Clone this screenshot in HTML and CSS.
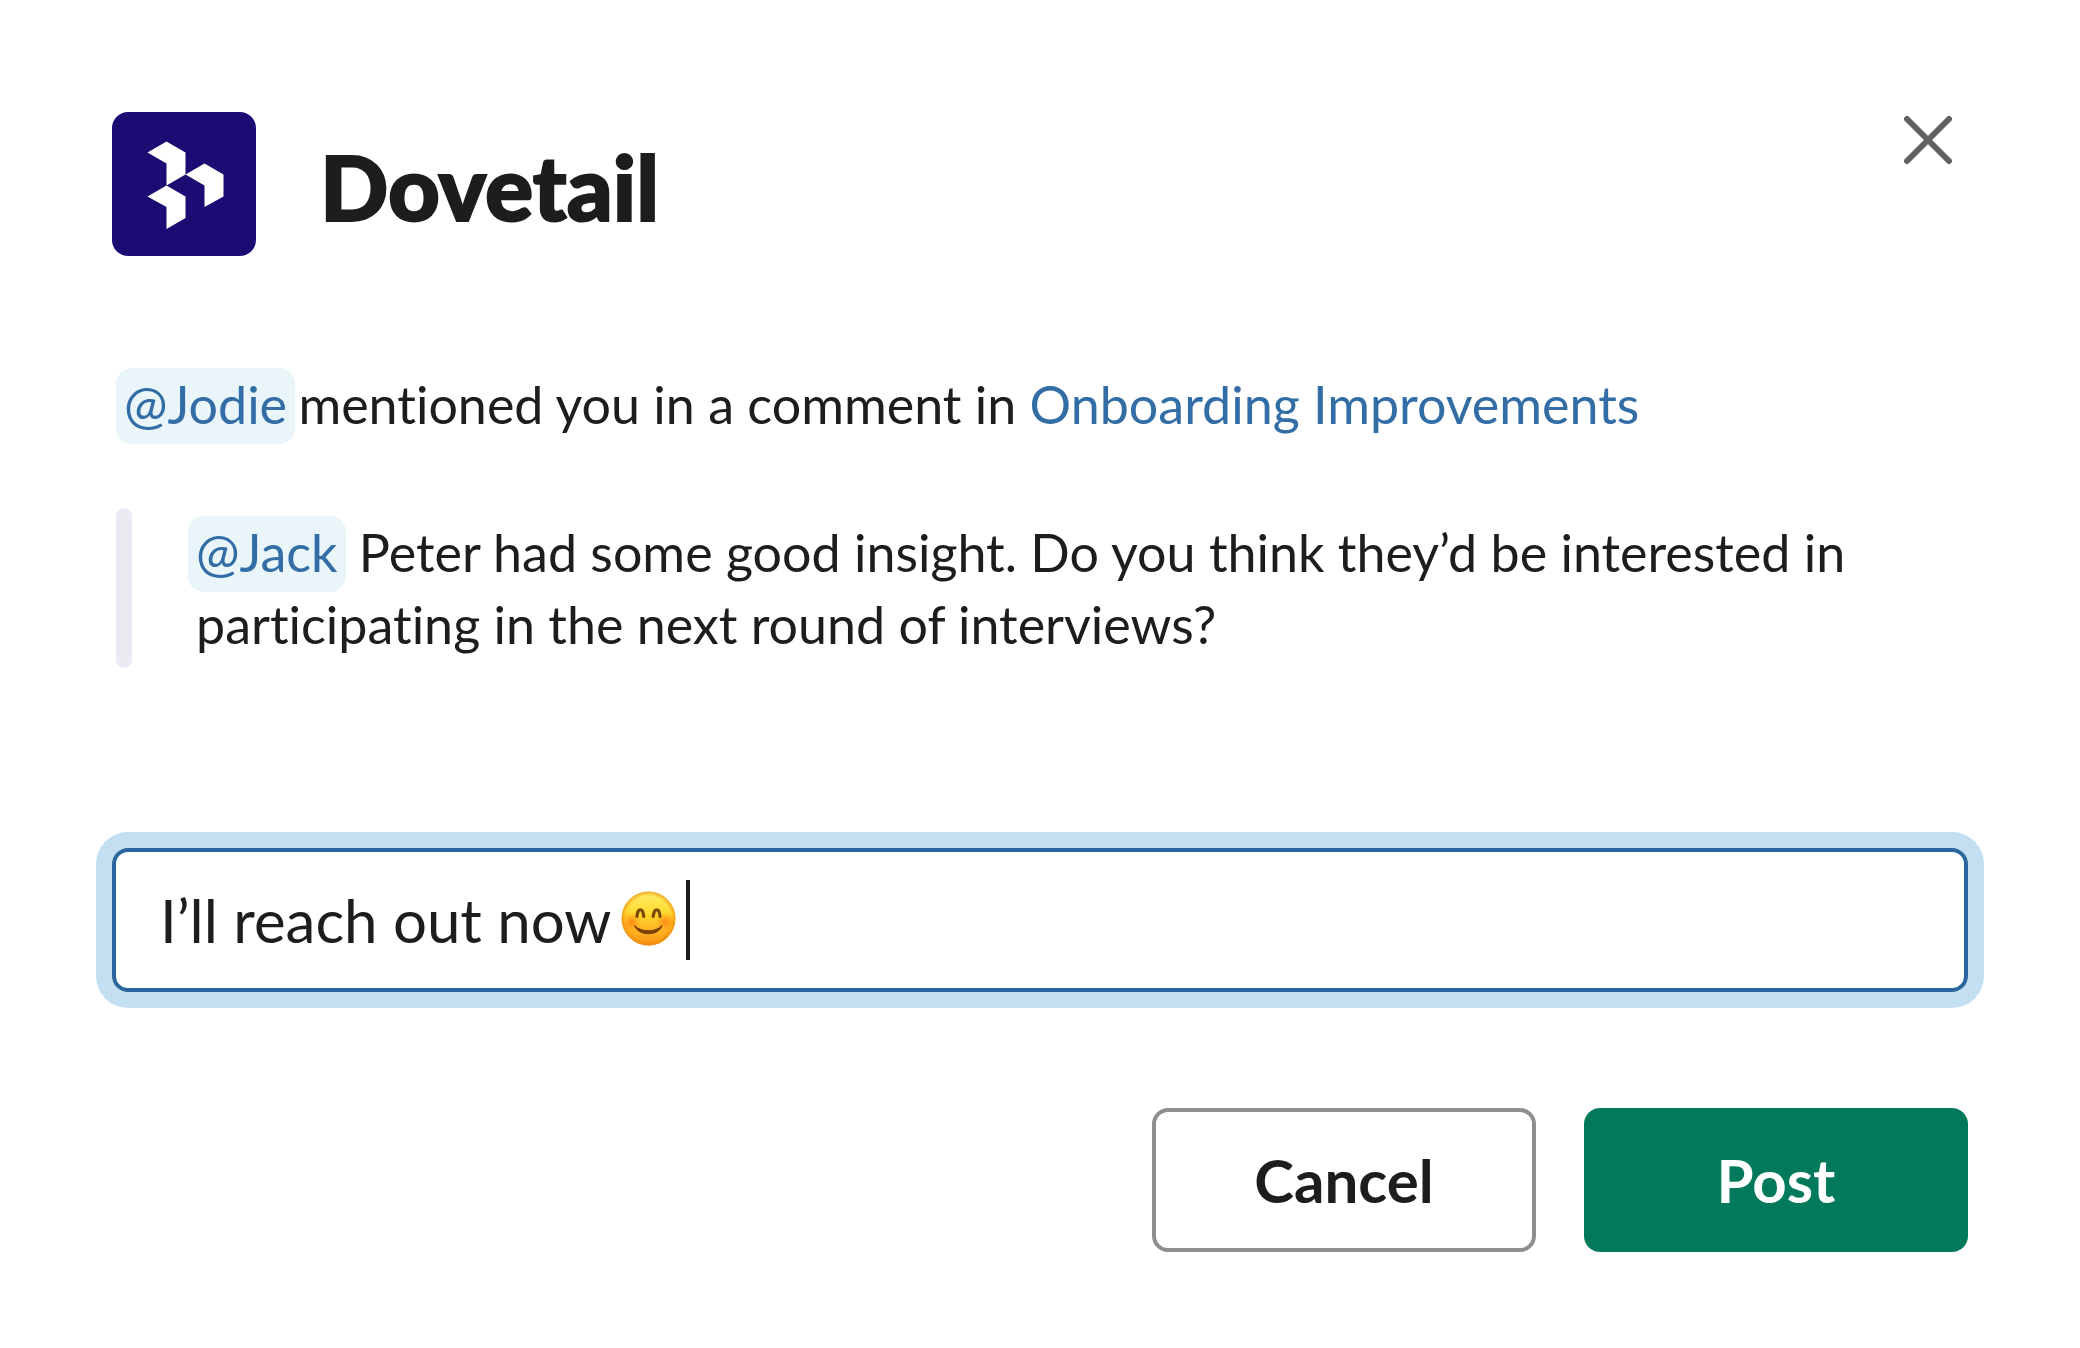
FILE: index.html
```html
<!DOCTYPE html>
<html lang="en">
<head>
<meta charset="utf-8">
<meta name="viewport" content="width=device-width, initial-scale=1">
<title>Dovetail</title>
<link rel="stylesheet" href="styles.css">
</head>
<body>
<main class="dialog">
  <header class="header">
    <svg class="logo" viewBox="0 0 144 144" aria-hidden="true">
      <path fill="#fff" d="M35.500 40.500 54.500 29.500 73.500 40.500V62.500L54.500 73.500V51.500Z"/>
      <path fill="#fff" d="M73.500 62.500 92.500 51.500 111.500 62.500V84.500L92.500 95V73.500Z"/>
      <path fill="#fff" d="M35.500 84.500 54.500 73.500 73.500 84.500V106L54.500 117V95Z"/>
    </svg>
    <h1 class="title">Dovetail</h1>
    <button class="close" type="button" aria-label="Close">
      <svg class="close-icon" viewBox="0 0 48 48" aria-hidden="true">
        <path d="M3 3 45 45M45 3 3 45" stroke="#616161" stroke-width="6" stroke-linecap="round"/>
      </svg>
    </button>
  </header>

  <p class="notice"><a class="mention" href="#jodie">@Jodie</a> mentioned you in a comment in <a class="link" href="#project">Onboarding Improvements</a></p>

  <blockquote class="quote">
    <p class="quote-text"><a class="mention" href="#jack">@Jack</a> Peter had some good insight. Do you think they’d be interested in participating in the next round of interviews?</p>
  </blockquote>

  <form class="reply">
    <label class="field">
      <input class="field-input" type="text" aria-label="Reply" value="I’ll reach out now">
      <svg class="emoji" viewBox="0 0 55 55" role="img" aria-label="Smiling face">
        <defs>
          <linearGradient id="face" x1="0" y1="0" x2="0" y2="1">
            <stop offset="0" stop-color="#fff06a"/>
            <stop offset=".4" stop-color="#ffd92e"/>
            <stop offset=".75" stop-color="#ffb01f"/>
            <stop offset="1" stop-color="#f59412"/>
          </linearGradient>
          <radialGradient id="rim">
            <stop offset=".82" stop-color="#ee8a0c" stop-opacity="0"/>
            <stop offset="1" stop-color="#e98208" stop-opacity=".65"/>
          </radialGradient>
          <radialGradient id="cheek">
            <stop offset="0" stop-color="#ff7a12" stop-opacity=".8"/>
            <stop offset="1" stop-color="#ff8a12" stop-opacity="0"/>
          </radialGradient>
        </defs>
        <circle cx="27.500" cy="27.500" r="27" fill="url(#face)"/>
        <circle cx="27.500" cy="27.500" r="27" fill="url(#rim)"/>
        <circle cx="10.500" cy="31" r="10" fill="url(#cheek)"/>
        <circle cx="44.500" cy="31" r="10" fill="url(#cheek)"/>
        <path d="M16 25.500C16.500 16.500 22 16.500 22.800 25.500M32.200 25.500C33 16.500 38.500 16.500 39 25.500" fill="none" stroke="#7a4a08" stroke-width="3.200" stroke-linecap="round"/>
        <path d="M13.500 34.500C20 41.500 35 41.500 41 34.500C38 45.500 17 45.500 13.500 34.500Z" fill="#7a3f05" stroke="#7a3f05" stroke-linejoin="round"/>
      </svg>
      <span class="caret" aria-hidden="true"></span>
    </label>
    <div class="actions">
      <button class="button button-secondary" type="button">Cancel</button>
      <button class="button button-primary" type="submit">Post</button>
    </div>
  </form>
</main>
</body>
</html>
```
FILE: styles.css
```css
* {
  box-sizing: border-box;
}

body {
  margin: 0;
  background: #fff;
  color: #1d1d1d;
  font-family: Lato, "Liberation Sans", sans-serif;
  font-size: 52px;
  font-variant-ligatures: none;
  line-height: 72px;
}

.dialog {
  padding: 112px 112px 96px;
}

.header {
  display: flex;
  align-items: center;
  gap: 64px;
}

.logo {
  flex: none;
  width: 144px;
  height: 144px;
  border-radius: 16px;
  background: #1e0a73;
}

.title {
  margin: 0;
  padding-top: 4px;
  font-size: 90px;
  font-weight: 900;
  line-height: 104px;
  -webkit-text-stroke: 2px currentColor;
}

.close {
  display: flex;
  align-items: center;
  justify-content: center;
  align-self: flex-start;
  width: 80px;
  height: 56px;
  margin-left: auto;
  padding: 0;
  border: 0;
  background: none;
}

.close-icon {
  width: 48px;
  height: 48px;
}

.notice {
  margin: 112px 0 0;
  padding-left: 12px;
}

.mention,
.link {
  color: #336da6;
  text-decoration: none;
}

.mention {
  margin-left: -8px;
  padding: 5px 8px 9px;
  border-radius: 16px;
  background: #e9f5f9;
}

.notice .mention {
  margin-right: -10px;
}

.quote {
  display: flex;
  gap: 64px;
  margin: 68px 0 0 4px;
}

.quote::before {
  content: "";
  flex: none;
  width: 16px;
  border-radius: 8px;
  background: #ebeaf0;
}

.quote-text {
  margin: 0;
  padding: 8px 0;
}

.reply {
  margin-top: 180px;
}

.field {
  display: flex;
  align-items: center;
  gap: 10px;
  height: 144px;
  padding: 0 44px;
  border: 4px solid #2b669f;
  border-radius: 16px;
  box-shadow: 0 0 0 16px #c3e0f0;
}

.field-input {
  field-sizing: content;
  min-width: 0;
  padding: 0;
  border: 0;
  outline: 0;
  background: none;
  color: inherit;
  font: inherit;
  font-size: 60px;
}

.emoji {
  flex: none;
  width: 55px;
  height: 55px;
  margin-bottom: 4px;
}

.caret {
  width: 4px;
  height: 80px;
  background: #1d1d1d;
}

.actions {
  display: flex;
  justify-content: flex-end;
  gap: 48px;
  margin-top: 116px;
}

.button {
  width: 384px;
  height: 144px;
  padding: 0;
  border: 4px solid transparent;
  border-radius: 16px;
  font: inherit;
  font-size: 60px;
  font-weight: 700;
}

.button-secondary {
  border-color: #8e8e8e;
  background: #fff;
  color: #1d1d1d;
}

.button-primary {
  border-color: #007a5a;
  background: #007a5a;
  color: #fff;
}
```
